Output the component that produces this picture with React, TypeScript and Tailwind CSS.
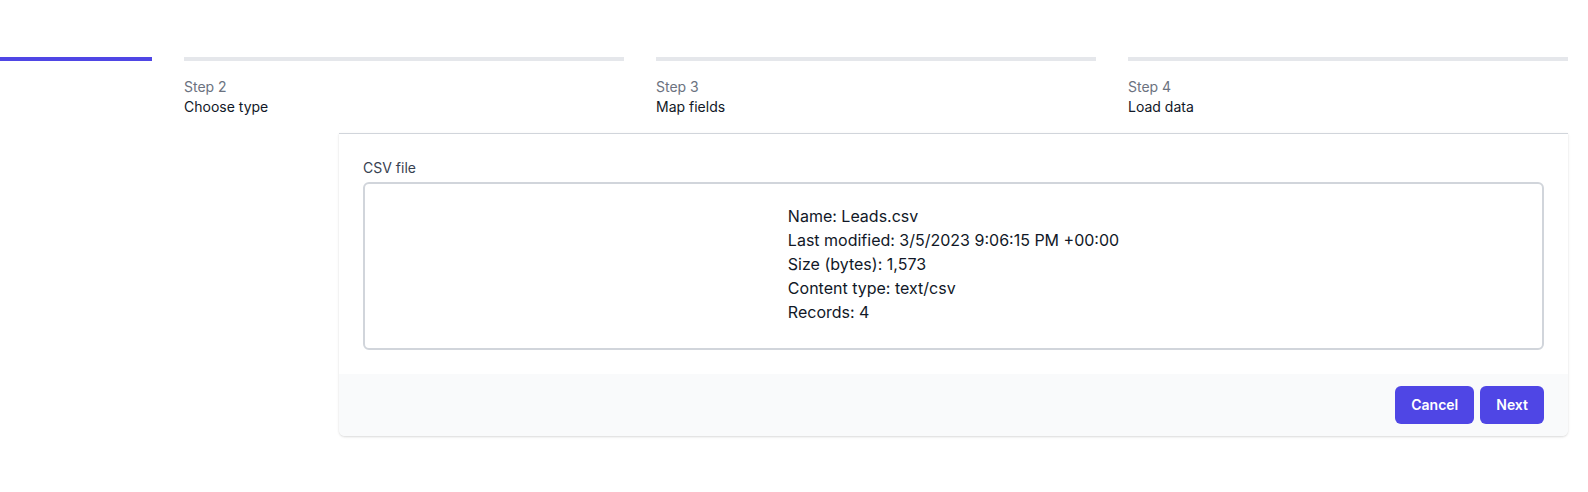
import React from 'react'

const steps = [
  { label: 'Step 2', title: 'Choose type' },
  { label: 'Step 3', title: 'Map fields' },
  { label: 'Step 4', title: 'Load data' },
]

const fileInfo = [
  'Name: Leads.csv',
  'Last modified: 3/5/2023 9:06:15 PM +00:00',
  'Size (bytes): 1,573',
  'Content type: text/csv',
  'Records: 4',
]

export default function App() {
  return (
    <div
      className="min-h-screen w-full bg-white pt-[57px] pr-5"
      style={{ fontFamily: 'Inter, "Noto Sans", sans-serif' }}
    >
      {/* Steps */}
      <nav className="grid grid-cols-[152px_440px_440px_440px] gap-x-8">
        <div className="h-1 bg-[#4f46e5]" />
        {steps.map((s) => (
          <div key={s.label} className="flex flex-col">
            <div className="h-1 bg-[#e5e7eb]" />
            <div className="pt-4">
              <p className="text-sm leading-5 text-[#6b7280]">{s.label}</p>
              <p className="text-sm leading-5 text-[#111827]">{s.title}</p>
            </div>
          </div>
        ))}
      </nav>

      {/* Card */}
      <div className="ml-[339px] mt-4 rounded-b-md border-t border-[#d1d5db] bg-white shadow-[0_1px_3px_rgba(0,0,0,0.1),0_1px_2px_rgba(0,0,0,0.06)]">
        <div className="p-6">
          <label className="block text-sm leading-5 text-[#374151]">CSV file</label>
          <div className="mt-1 flex h-[168px] justify-center rounded-md border-2 border-[#d1d5db] py-[20px]">
            <div className="text-base leading-6 text-[#111827]">
              {fileInfo.map((line) => (
                <p key={line}>{line}</p>
              ))}
            </div>
          </div>
        </div>
        <div className="flex justify-end gap-1.5 rounded-b-md bg-[#f9fafb] px-6 py-3">
          <button className="rounded-md bg-[#4f46e5] px-4 py-[9px] text-sm leading-5 font-semibold text-white">
            Cancel
          </button>
          <button className="rounded-md bg-[#4f46e5] px-4 py-[9px] text-sm leading-5 font-semibold text-white">
            Next
          </button>
        </div>
      </div>
    </div>
  )
}
